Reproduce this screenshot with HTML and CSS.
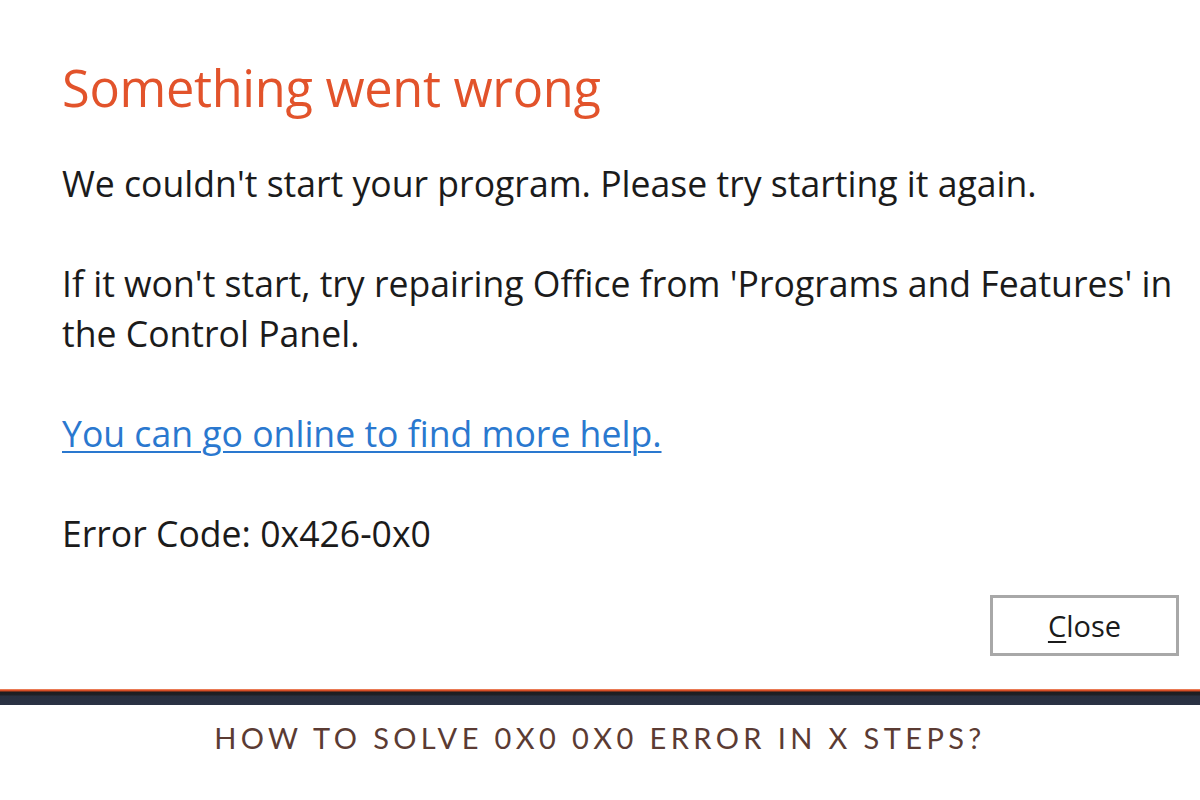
FILE: index.html
```html
<!DOCTYPE html>
<html lang="en">
<head>
<meta charset="utf-8">
<title>Something went wrong</title>
<link rel="stylesheet" href="styles.css">
</head>
<body>
<main class="dialog">
  <h1 class="title">Something went wrong</h1>
  <p class="msg">We couldn't start your program. Please try starting it again.</p>
  <p class="msg">If it won't start, try repairing Office from 'Programs and Features' in the Control Panel.</p>
  <p class="msg"><a class="link" href="#">You can go online to find more help.</a></p>
  <p class="msg">Error Code: 0x426-0x0</p>
  <div class="actions">
    <button class="close-btn" type="button"><span class="accel">C</span>lose</button>
  </div>
</main>
<div class="band"></div>
<p class="caption">HOW TO SOLVE 0X0 0X0 ERROR IN X STEPS?</p>
</body>
</html>
```

FILE: styles.css
```css
html, body {
  margin: 0;
  padding: 0;
  background: #ffffff;
}

body {
  width: 1200px;
  height: 800px;
  overflow: hidden;
}

.dialog {
  padding: 58px 21px 0 62px;
  font-family: "Open Sans", "Noto Sans", sans-serif;
  color: #1b1b1b;
}

.title {
  margin: 0 0 40px 0;
  font-weight: 400;
  font-size: 50.5px;
  line-height: 60px;
  color: #e2532b;
  letter-spacing: -0.3px;
}

.msg {
  margin: 0 0 50px 0;
  font-size: 35.6px;
  line-height: 50px;
  max-width: 1117px;
}

.msg:last-of-type {
  margin-bottom: 0;
}

.link {
  color: #2a78cf;
  text-decoration: underline;
  text-decoration-thickness: 2px;
  text-underline-offset: 4px;
}

.actions {
  display: flex;
  justify-content: flex-end;
  margin-top: 37px;
}

.close-btn {
  width: 189px;
  height: 61px;
  border: 3px solid #a8a8a8;
  background: #ffffff;
  font-family: "Open Sans", "Noto Sans", sans-serif;
  font-size: 29px;
  color: #1b1b1b;
  padding: 0;
  line-height: 1;
}

.accel {
  text-decoration: underline;
  text-decoration-thickness: 2px;
  text-underline-offset: 4px;
}

.band {
  margin-top: 33px;
  height: 16px;
  background: linear-gradient(to bottom,
    #f3a07f 0px, #e0552b 1px, #c8451f 2px,
    #1d1d1f 3px, #1e2026 6px,
    #28303f 7px, #2a3244 16px);
}

.caption {
  margin: 13px 0 0 0;
  text-align: center;
  font-family: "Lato", "Noto Sans", sans-serif;
  font-size: 29px;
  line-height: 40px;
  letter-spacing: 4.4px;
  color: #5b3b33;
}
```
